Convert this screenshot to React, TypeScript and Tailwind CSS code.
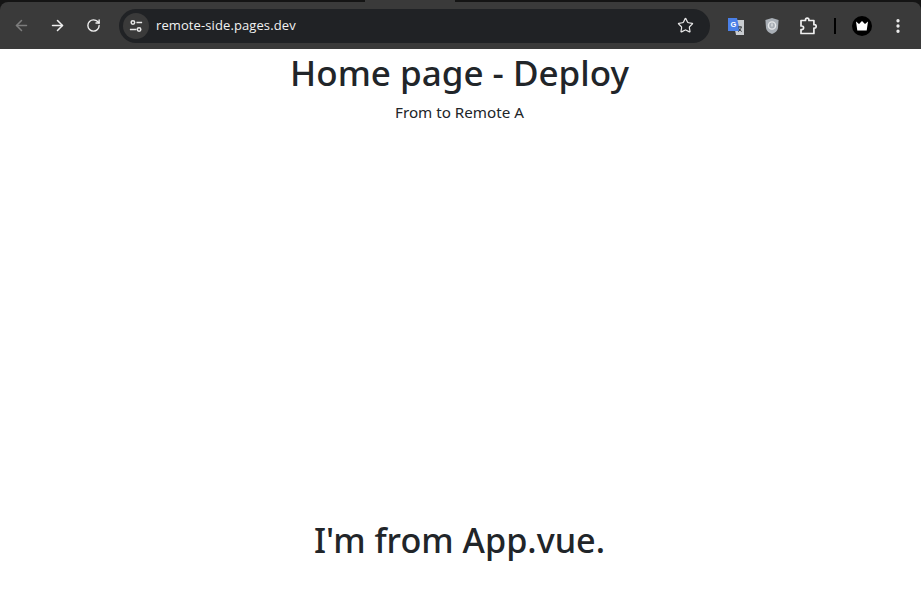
import { ArrowLeft, ArrowRight, RotateCw, Star, EllipsisVertical } from 'lucide-react';

function SiteControls() {
  return (
    <svg width="14" height="14" viewBox="0 0 16 16" fill="none" stroke="#e8e8e8" strokeWidth="1.7">
      <circle cx="4.500" cy="4" r="2" />
      <path d="M8.500 4H15" />
      <circle cx="11.500" cy="12" r="2" />
      <path d="M1 12h7.500" />
    </svg>
  );
}

function TranslateIcon() {
  return (
    <svg width="18" height="18" viewBox="0 0 18 18">
      <path d="M6 3h11v15H9z" fill="#c9ccd0" />
      <path d="M1 1h9l3 13H1z" fill="#4a80e8" />
      <text x="3.400" y="10" fontSize="7.500" fontWeight="700" fill="#fff" fontFamily="Liberation Sans, sans-serif">G</text>
      <path d="M11 10h4M13 9v1M14.300 10c-.6 2.600-2 4-3.200 4.600M11.800 11.500c.7 1.400 1.700 2.400 3 3" stroke="#3c4043" strokeWidth="1" fill="none" />
    </svg>
  );
}

function ShieldIcon() {
  return (
    <svg width="16" height="18" viewBox="0 0 16 18">
      <path d="M8 1l6.600 2-.6 8c-.4 3-3 5-6 6-3-1-5.600-3-6-6L1.400 3z" fill="#a9afb6" />
      <circle cx="8" cy="8.500" r="3.600" fill="none" stroke="#e6e8ea" strokeWidth="1.400" />
      <path d="M8 6.500v3" stroke="#e6e8ea" strokeWidth="1.200" />
    </svg>
  );
}

function ExtensionIcon() {
  return (
    <svg width="18" height="18" viewBox="0 0 18 18" fill="none" stroke="#f0f0f0" strokeWidth="1.700" strokeLinejoin="round">
      <path d="M2 3.500h4.500V2.800a1.700 1.700 0 0 1 3.400 0v.7h5v4.200h.6a1.700 1.700 0 0 1 0 3.400h-.6v5.400H2v-3.900h.8a1.800 1.800 0 0 0 0-3.600H2z" />
    </svg>
  );
}

function CrownAvatar() {
  return (
    <div className="w-5 h-5 rounded-full bg-black flex items-center justify-center">
      <svg width="14" height="12" viewBox="0 0 14 12">
        <path d="M1 1.500l3 2.500L7 1l3 3 3-2.500-1.300 9H2.300z" fill="#fff" />
      </svg>
    </div>
  );
}

export default function App() {
  return (
    <div className="h-[592px] w-[921px] overflow-hidden bg-white flex flex-col font-['Noto_Sans','Open_Sans',sans-serif]">
      {/* browser chrome */}
      <div className="h-[49px] shrink-0 bg-[#141414] flex flex-col">
        <div className="h-[2px] pl-[365px]">
          <div className="w-[90px] h-full bg-[#3a3a3a]" />
        </div>
        <div className="flex-1 bg-[#3a3a3a] rounded-t-[8px] flex items-center pl-[13px] pr-[14px]">
          <ArrowLeft size={17} strokeWidth={2.200} className="text-[#7d7d7d]" />
          <ArrowRight size={17} strokeWidth={2.200} className="text-[#f0f0f0] ml-[19px]" />
          <RotateCw size={15} strokeWidth={2.200} className="text-[#f0f0f0] ml-[20px]" />
          <div className="ml-[18px] w-[591px] h-[34px] rounded-full bg-[#202225] flex items-center pl-[4px] pr-[16px]">
            <div className="w-[26px] h-[26px] rounded-full bg-[#3a3a3a] flex items-center justify-center">
              <SiteControls />
            </div>
            <span className="ml-[7px] text-[13px] tracking-[0.1px] text-[#f2f2f2] font-['Open_Sans',sans-serif] leading-none">remote-side.pages.dev</span>
            <Star size={17} strokeWidth={1.700} className="ml-auto text-[#e8e8e8]" />
          </div>
          <div className="ml-[17px] flex items-center">
            <TranslateIcon />
            <div className="ml-[19px]"><ShieldIcon /></div>
            <div className="ml-[19px]"><ExtensionIcon /></div>
            <div className="ml-[17px] w-[2px] h-[16px] bg-black" />
            <div className="ml-[16px]"><CrownAvatar /></div>
            <EllipsisVertical size={18} strokeWidth={2.400} className="ml-[17px] text-[#f0f0f0]" />
          </div>
        </div>
      </div>

      {/* page */}
      <div className="flex-1 flex flex-col items-center text-[#212529] pr-[2px]">
        <h1 className="mt-[2px] text-[35px] leading-[43px] font-medium">Home page - Deploy</h1>
        <p className="mt-[6px] text-[15.200px] leading-[24px]">From to Remote A</p>
        <h1 className="mt-[394px] text-[34.200px] leading-[43px] font-medium">I'm from App.vue.</h1>
      </div>
    </div>
  );
}
